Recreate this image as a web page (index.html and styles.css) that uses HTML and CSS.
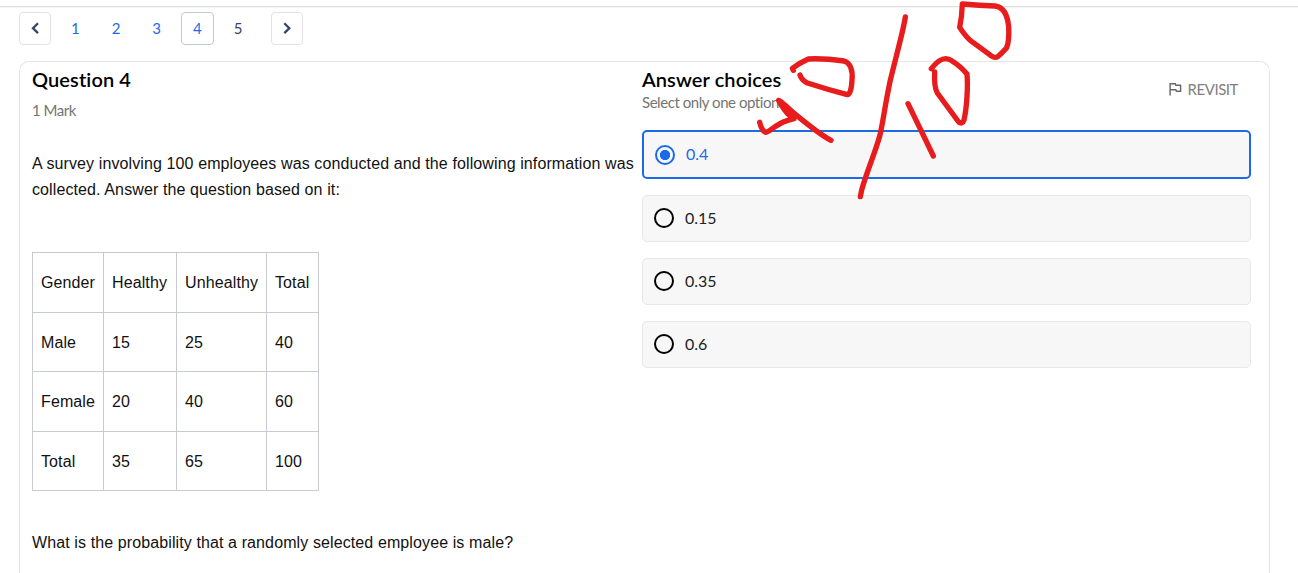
FILE: index.html
```html
<!DOCTYPE html>
<html lang="en">
<head>
<meta charset="utf-8">
<title>Question 4</title>
<link rel="stylesheet" href="styles.css">
</head>
<body>
<div class="topline"></div>
<nav class="pager">
  <button class="step" aria-label="Previous"><svg width="8" height="13" viewBox="0 0 8 13"><path d="M7 1.3 2 6.2l5 4.9"/></svg></button>
  <a class="page">1</a>
  <a class="page">2</a>
  <a class="page">3</a>
  <a class="page current">4</a>
  <a class="page unseen">5</a>
  <button class="step next" aria-label="Next"><svg width="8" height="13" viewBox="0 0 8 13"><path d="M1.3 1.3l5 4.9-5 4.9"/></svg></button>
</nav>
<main class="card">
  <section class="question">
    <h1 class="title">Question 4</h1>
    <p class="mark">1 Mark</p>
    <p class="text">A survey involving 100 employees was conducted and the following information was<br>collected. Answer the question based on it:</p>
    <table class="data">
      <tr><td>Gender</td><td>Healthy</td><td>Unhealthy</td><td>Total</td></tr>
      <tr><td>Male</td><td>15</td><td>25</td><td>40</td></tr>
      <tr><td>Female</td><td>20</td><td>40</td><td>60</td></tr>
      <tr><td>Total</td><td>35</td><td>65</td><td>100</td></tr>
    </table>
    <p class="text ask">What is the probability that a randomly selected employee is male?</p>
  </section>
  <section class="answers">
    <header class="answers-head">
      <div>
        <h2 class="title">Answer choices</h2>
        <p class="hint">Select only one option</p>
      </div>
      <div class="revisit">
        <svg width="13" height="14" viewBox="0 0 13 14"><path d="M1.1 13.6V1.7h5.2l.5 1.5h4.8v6H7.4l-.6-1.5H1.1"/></svg>
        <span>REVISIT</span>
      </div>
    </header>
    <div class="options">
      <div class="option selected"><span class="radio"></span><span class="label">0.4</span></div>
      <div class="option"><span class="radio"></span><span class="label">0.15</span></div>
      <div class="option"><span class="radio"></span><span class="label">0.35</span></div>
      <div class="option"><span class="radio"></span><span class="label">0.6</span></div>
    </div>
  </section>
</main>
<svg class="ink" width="290" height="210" viewBox="0 0 870 630">
  <path d="M59 367Q65 392 77 397C84 398 103 378 130 366Q145 360 162 356L142 340Q122 316 116 301C124 302 140 323 170 346C205 375 245 406 273 421"/>
  <path d="M160 211L157 205Q180 188 205 177Q245 174 312 183C331 188 339 212 336 240Q334 282 322 284Q262 268 200 248Q184 239 180 225"/>
  <path d="M496 51C490 93 465 180 450 245C434 322 429 366 420 405C404 463 379 518 365 570L361 590"/>
  <path d="M504 311L539 383L580 468"/>
  <path d="M574 206C596 178 615 168 635 182Q660 197 681 222C684 260 681 320 672 360Q667 374 656 366L592 279C582 262 583 235 584 216"/>
  <path d="M667 12Q720 17 765 18C793 21 803 51 806 80Q808 125 800 143Q786 159 773 170Q765 175 753 167L700 128Q681 116 659 82Q666 50 667 12Z"/>
</svg>
</body>
</html>
```
FILE: styles.css
```css
* { box-sizing: border-box; }
html, body { height: 100%; }
body {
  margin: 0;
  height: 573px;
  overflow: hidden;
  background: #fff;
  color: #000;
  font-family: Lato, sans-serif;
  display: flex;
  flex-direction: column;
}
h1, h2, p { margin: 0; }
.topline {
  flex: none;
  height: 2px;
  margin-top: 6px;
  background: #f5f5f5;
  border-top: 1px solid #e2e2e4;
}
.pager {
  flex: none;
  display: flex;
  gap: 8px;
  padding: 4px 0 0 19px;
  height: 53px;
}
.step, .page {
  display: flex;
  align-items: center;
  justify-content: center;
  height: 33px;
  border: 1px solid transparent;
  border-radius: 4px;
}
.step {
  width: 32px;
  padding: 0;
  background: #fff;
  border-color: #e2e3e8;
}
.step path {
  fill: none;
  stroke: #344563;
  stroke-width: 2.3;
}
.next { margin-left: 9px; }
.page {
  width: 32.7px;
  padding-bottom: 1px;
  font-size: 15px;
  color: #1b6be8;
}
.current { border-color: #c4c8d8; }
.unseen { color: #344563; }
.card {
  flex: 1;
  display: flex;
  margin: 0 28px 0 19px;
  border: 1px solid #e5e5e5;
  border-bottom: 0;
  border-radius: 10px 10px 0 0;
}
.question {
  width: 622px;
  padding: 5px 0 0 12px;
}
.title {
  font-size: 20px;
  line-height: 24px;
  font-weight: 600;
  letter-spacing: .1px;
}
.mark {
  margin-top: 9px;
  font-size: 15px;
  line-height: 20px;
  letter-spacing: -.5px;
  color: #757575;
}
.text {
  margin-top: 31px;
  font: 16px/26px "Liberation Sans", Arial, sans-serif;
  letter-spacing: .108px;
  color: #111;
  white-space: nowrap;
}
.data {
  width: 287px;
  margin-top: 49px;
  table-layout: fixed;
  border-collapse: collapse;
  font: 16px/26px "Liberation Sans", Arial, sans-serif;
  letter-spacing: .112px;
  color: #111;
}
.data td {
  height: 59.5px;
  padding: 2px 0 0 8px;
  border: 1px solid #c9cad8;
}
.data td:nth-child(1) { width: 71px; }
.data td:nth-child(2) { width: 73px; }
.data td:nth-child(3) { width: 90px; }
.ask { margin-top: 39px; }
.answers {
  width: 609px;
  padding-top: 5px;
}
.answers-head {
  display: flex;
  justify-content: space-between;
  height: 63px;
}
.hint {
  margin-top: 1px;
  font-size: 15px;
  line-height: 20px;
  letter-spacing: -.45px;
  color: #757575;
}
.revisit {
  display: flex;
  align-items: center;
  gap: 6px;
  height: 20px;
  margin: 12px 13px 0 0;
  font-size: 15px;
  letter-spacing: -.45px;
  color: #808080;
}
.revisit path {
  fill: none;
  stroke: #666;
  stroke-width: 1.4;
}
.options {
  display: flex;
  flex-direction: column;
  gap: 16px;
}
.option {
  display: flex;
  align-items: center;
  gap: 11px;
  height: 47px;
  padding-left: 11px;
  background: #f7f7f7;
  border: 1px solid #e8e8e8;
  border-radius: 5px;
  font-size: 16px;
  color: #222;
}
.label { padding-bottom: 2px; }
.radio {
  width: 20px;
  height: 20px;
  margin-bottom: 1px;
  border: 2px solid #000;
  border-radius: 50%;
}
.selected {
  height: 49px;
  border: 2px solid #1b6be8;
  color: #1b6be8;
}
.selected .radio {
  margin-bottom: 0;
  border-color: #1b6be8;
  background: radial-gradient(circle, #1b6be8 4.8px, transparent 5.4px);
}
.ink {
  position: absolute;
  left: 740px;
  top: 0;
  fill: none;
  stroke: #e81c1c;
  stroke-width: 16;
  stroke-linecap: round;
  stroke-linejoin: round;
}
```
